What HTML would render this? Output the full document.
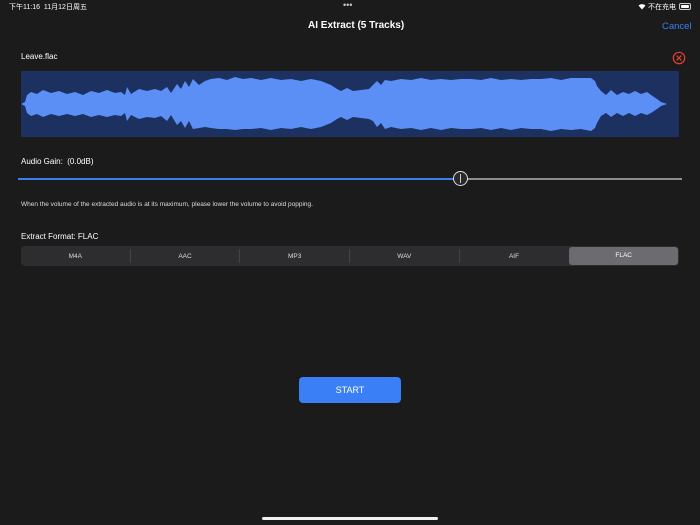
<!DOCTYPE html>
<html><head><meta charset="utf-8"><style>
html,body{margin:0;padding:0;}
body{width:700px;height:525px;background:#1b1b1b;position:relative;overflow:hidden;font-family:"Liberation Sans","Noto Sans CJK SC",sans-serif;color:#fff;}
.a{position:absolute;white-space:nowrap;}
.seg div{flex:1;text-align:center;line-height:14px;margin:3px 0;}
</style></head><body>
<div class="a" style="left:9px;top:2px;font-size:7px;">下午11:16&nbsp;&nbsp;11月12日周五</div>
<div class="a" style="left:343px;top:0px;font-size:9px;color:#ccc;">•••</div>
<div class="a" style="left:638px;top:2px;font-size:7px;">
<svg width="8" height="7" viewBox="0 0 8 7" style="vertical-align:-1px"><path d="M0.5 2.5 A5 5 0 0 1 7.5 2.5 L4 6.5Z" fill="#fff"/></svg> 不在充电</div>
<div class="a" style="left:679px;top:3px;width:10px;height:5px;border:1px solid #ccc;border-radius:2px;"><div style="margin:1px;height:3px;background:#fff;border-radius:1px"></div></div>
<div class="a" style="left:308px;top:20px;font-size:10px;font-weight:bold;">AI Extract (5 Tracks)</div>
<div class="a" style="left:662px;top:21px;font-size:9.5px;color:#3a7ff0;">Cancel</div>
<div class="a" style="left:21px;top:52px;font-size:8px;">Leave.flac</div>
<svg class="a" style="left:672px;top:51px" width="14" height="14" viewBox="0 0 14 14"><circle cx="7" cy="7" r="5.7" fill="none" stroke="#e0402e" stroke-width="1.2"/><path d="M4.6 4.6L9.4 9.4M9.4 4.6L4.6 9.4" stroke="#e0402e" stroke-width="1.2"/></svg>
<svg class="a" style="left:21px;top:71px" width="658" height="66" viewBox="0 0 658 66">
<rect width="658" height="66" fill="#1c3160"/>
<polygon fill="#5b8ff5" points="0,33 4,31 6,24 10,21 16,23 22,19 30,22 38,20 46,23 54,21 62,24 70,20 78,22 86,19 94,22 100,21 104,24 106,16 110,23 118,18 126,20 134,18 140,20 146,16 150,22 156,13 160,18 164,10 168,16 172,8 178,14 184,10 190,8 198,7 206,9 214,6 222,8 230,7 240,9 250,7 260,9 270,8 280,10 290,8 300,10 310,14 316,18 320,20 326,17 332,20 340,19 348,18 352,14 356,10 360,14 364,9 370,10 380,8 390,9 400,7 410,9 420,8 430,9 440,8 450,8 460,9 470,7 480,9 490,8 500,9 510,8 520,8 530,7 540,9 550,7 560,7 570,7 574,10 576,15 580,20 585,24 590,19 596,24 602,21 608,23 614,20 620,23 626,21 630,24 636,28 640,31 646,33 658,33 646,33 640,35 636,38 630,42 626,44 620,42 614,45 608,42 602,45 596,42 590,46 585,42 580,45 576,52 574,57 570,60 560,58 550,59 540,58 530,60 520,58 510,58 500,57 490,59 480,57 470,59 460,57 450,58 440,58 430,57 420,59 410,57 400,59 390,57 380,58 370,56 364,58 360,52 356,56 352,50 348,48 340,47 332,46 326,49 320,46 316,48 310,52 300,56 290,58 280,56 270,58 260,57 250,59 240,57 230,58 222,58 214,59 206,58 198,58 190,57 184,56 178,57 172,58 168,50 164,57 160,50 156,54 150,44 146,50 140,45 134,47 126,46 118,48 110,44 106,50 104,42 100,45 94,44 86,46 78,44 70,46 62,43 54,45 46,43 38,45 30,43 22,46 16,43 10,45 6,42 4,35 0,33"/>
</svg>
<div class="a" style="left:21px;top:157px;font-size:8px;">Audio Gain:&nbsp; (0.0dB)</div>
<div class="a" style="left:18px;top:178px;width:443px;height:2px;background:#3a7ff0;"></div>
<div class="a" style="left:461px;top:178px;width:221px;height:2px;background:#8e8e8e;"></div>
<div class="a" style="left:453px;top:171px;width:13px;height:13px;border:1.3px solid #ddd;border-radius:50%;background:#2a2a2a;"></div>
<div class="a" style="left:460px;top:174px;width:1px;height:9px;background:#ccc;"></div>
<div class="a" style="left:21px;top:201px;font-size:6.5px;color:#ddd;">When the volume of the extracted audio is at its maximum, please lower the volume to avoid popping.</div>
<div class="a" style="left:21px;top:232px;font-size:8px;">Extract Format: FLAC</div>
<div class="a seg" style="left:21px;top:246px;width:658px;height:20px;background:#2d2d2f;border-radius:4px;display:flex;font-size:6.5px;color:#ddd;">
<div style="border-right:1px solid #444;margin-top:3px;line-height:15px">M4A</div>
<div style="border-right:1px solid #444;line-height:15px">AAC</div>
<div style="border-right:1px solid #444;line-height:15px">MP3</div>
<div style="border-right:1px solid #444;line-height:15px">WAV</div>
<div style="line-height:15px">AIF</div>
<div style="line-height:18px;margin:1px;background:#6b6b70;border-radius:3px;color:#fff">FLAC</div>
</div>
<div class="a" style="left:299px;top:377px;width:102px;height:26px;background:#3a7ff5;border-radius:4px;text-align:center;line-height:27px;font-size:9px;">START</div>
<div class="a" style="left:262px;top:517px;width:176px;height:3px;background:#f0f0f0;border-radius:2px;"></div>
</body></html>
